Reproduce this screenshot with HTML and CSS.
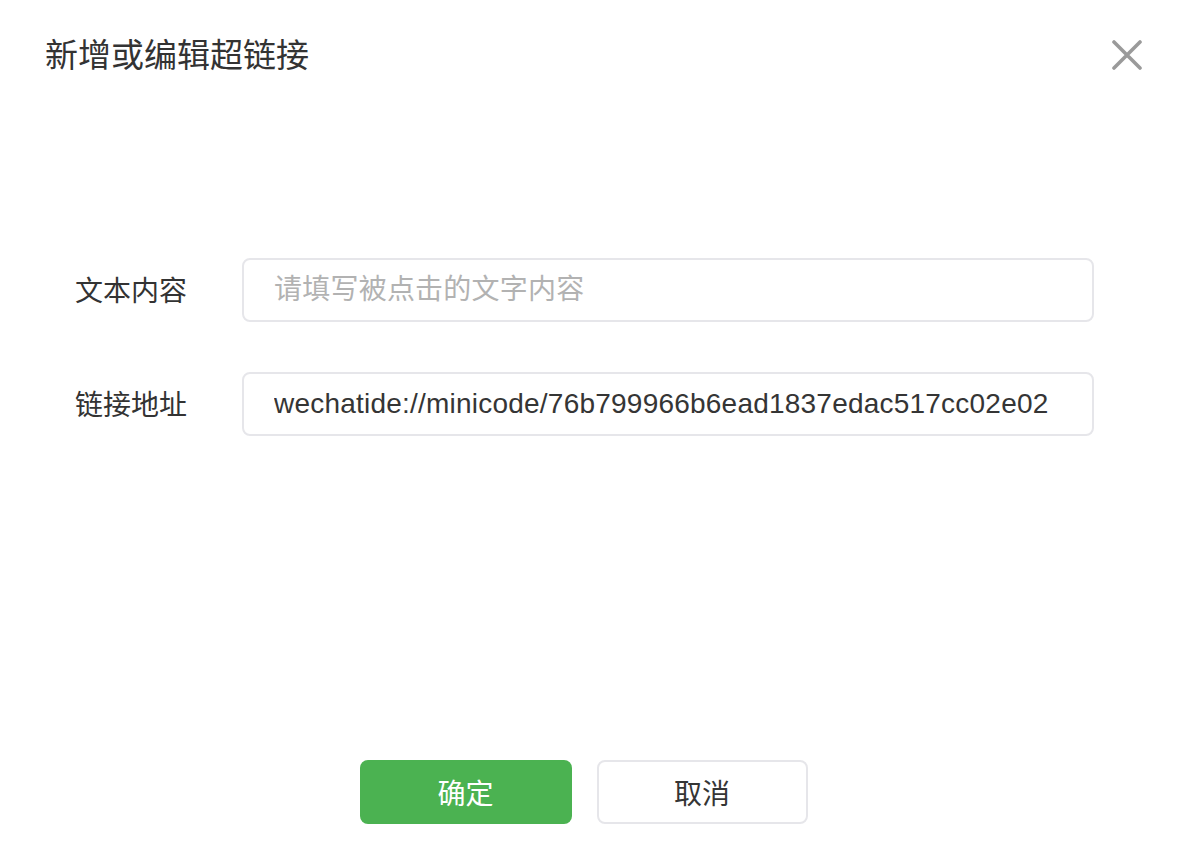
FILE: index.html
```html
<!DOCTYPE html>
<html lang="zh-CN">
<head>
<meta charset="UTF-8">
<meta name="viewport" content="width=device-width, initial-scale=1.0">
<title>新增或编辑超链接</title>
<link rel="stylesheet" href="styles.css">
</head>
<body>

<div class="dialog">
    <div class="dialog-header">
        <h1 class="dialog-title">新增或编辑超链接</h1>
        <button class="close-btn" aria-label="关闭">
            <svg width="30" height="30" viewBox="0 0 30 30">
                <path d="M2 2 L28 28 M28 2 L2 28" stroke="#9a9a9a" stroke-width="3.6" stroke-linecap="round" fill="none"/>
            </svg>
        </button>
    </div>

    <div class="link-form">
        <div class="form-row">
            <label for="linkText">文本内容</label>
            <input type="text" id="linkText" placeholder="请填写被点击的文字内容">
        </div>
        <div class="form-row">
            <label for="linkUrl">链接地址</label>
            <input type="text" id="linkUrl" value="wechatide://minicode/76b799966b6ead1837edac517cc02e02">
        </div>
    </div>

    <div class="dialog-footer">
        <button class="btn btn-primary">确定</button>
        <button class="btn btn-default">取消</button>
    </div>
</div>

</body>
</html>
```

FILE: styles.css
```css
body {
    margin: 0;
    background: #fff;
    font-family: "Helvetica Neue", "Liberation Sans", "Noto Sans CJK SC", sans-serif;
    color: #353535;
}
.dialog {
    width: 1178px;
    height: 852px;
    box-sizing: border-box;
}
.dialog-header {
    display: flex;
    justify-content: space-between;
    align-items: flex-start;
    padding: 36px 36px 0 45px;
}
.dialog-title {
    margin: 0;
    font-size: 33px;
    font-weight: normal;
    line-height: 40px;
    color: #333;
}
.close-btn {
    margin-top: 4px;
    width: 30px;
    height: 30px;
    padding: 0;
    border: none;
    background: none;
    cursor: pointer;
}
.close-btn svg {
    display: block;
}
.link-form {
    margin-top: 182px;
    padding: 0 84px 0 75px;
}
.form-row {
    display: flex;
    align-items: center;
}
.form-row + .form-row {
    margin-top: 50px;
}
.form-row label {
    width: 167px;
    flex-shrink: 0;
    font-size: 28px;
    color: #333;
    margin-top: -3px;
}
.form-row input {
    flex: 1;
    height: 64px;
    padding: 0 30px;
    box-sizing: border-box;
    border: 2px solid #e6e6ea;
    border-radius: 8px;
    font-family: inherit;
    font-size: 28px;
    letter-spacing: 0.22px;
    color: #353535;
    outline: none;
}
.form-row input::placeholder {
    color: #b2b2b2;
}
.dialog-footer {
    display: flex;
    justify-content: center;
    gap: 25px;
    margin-top: 324px;
    padding-right: 11px;
}
.btn {
    width: 212px;
    height: 64px;
    border-radius: 8px;
    font-family: inherit;
    font-size: 28px;
    cursor: pointer;
}
.btn-primary {
    background-color: #4bb251;
    border: none;
    color: #fff;
}
.btn-default {
    width: 211px;
    background-color: #fff;
    border: 2px solid #e6e6ea;
    color: #353535;
}
```
